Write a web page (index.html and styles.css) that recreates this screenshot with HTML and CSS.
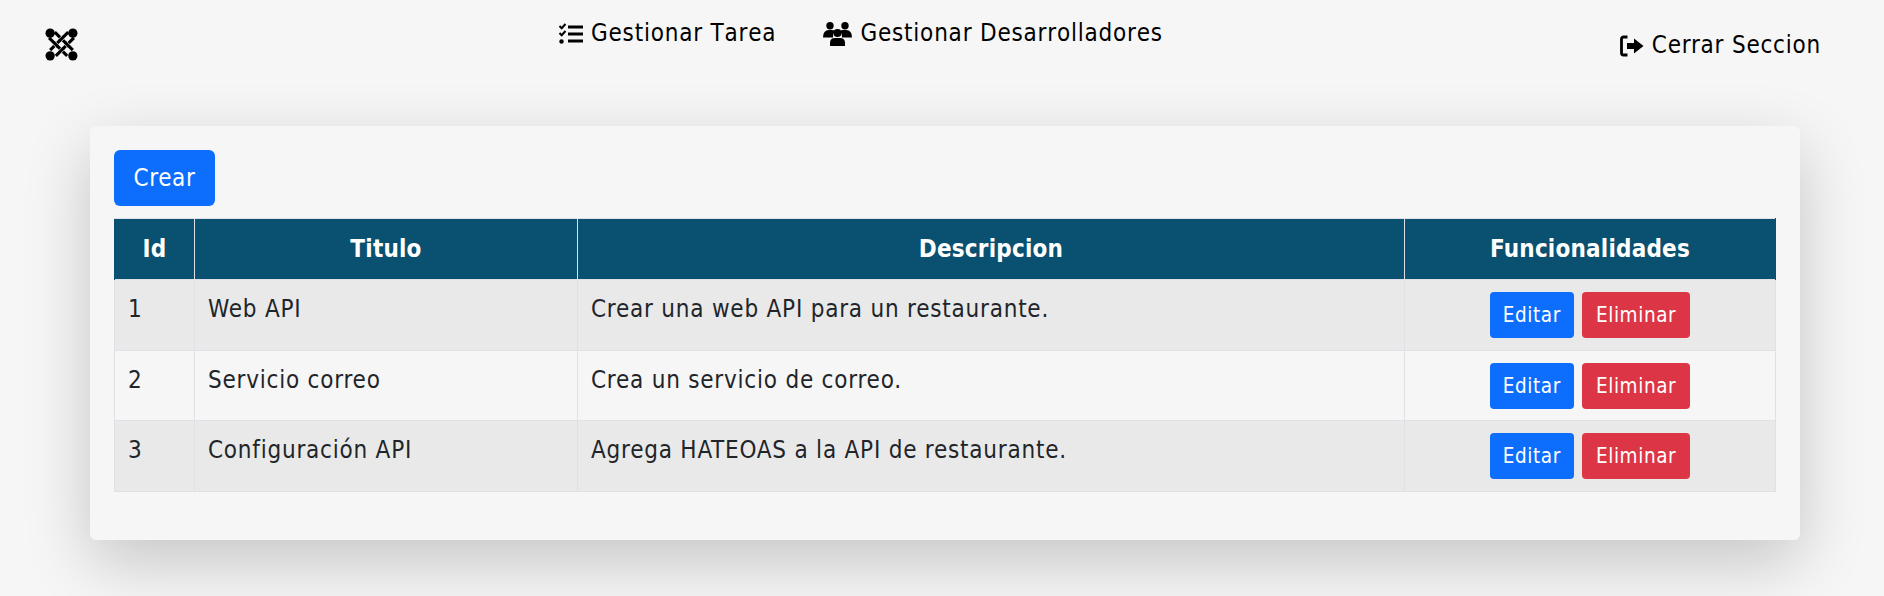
FILE: index.html
```html
<!DOCTYPE html>
<html lang="es">
<head>
<meta charset="utf-8">
<title>Gestionar Tarea</title>
<link rel="stylesheet" href="styles.css">
</head>
<body>
<header class="topbar">
  <a class="brand" href="#" aria-label="Inicio">
    <svg class="logo" viewBox="0 0 32 32" aria-hidden="true">
      <g class="strand">
        <path d="M4 9.500 L21.500 27"/>
        <path d="M9.500 4 L27 21.500"/>
        <path d="M22.500 4 L5 21.500"/>
        <path d="M28 9.500 L10.500 27"/>
      </g>
      <path class="halo" d="M9 14.500 L12 17.500 M20 14.500 L23 17.500 M17.500 9 L14.500 12 M17.500 20 L14.500 23"/>
      <path class="strand" d="M8.500 14 L12.500 18 M19.500 14 L23.500 18 M18 8.500 L14 12.500 M18 19.500 L14 23.500"/>
      <circle cx="5" cy="5" r="4.500"/><circle cx="27" cy="5" r="4.500"/>
      <circle cx="5" cy="27" r="4.500"/><circle cx="27" cy="27" r="4.500"/>
    </svg>
  </a>
  <nav class="mainnav">
    <a class="navlink" href="#">
      <svg class="ico ico-tasks" viewBox="0 0 24 24" aria-hidden="true">
        <path class="line" d="M9 5h15M9 12h15M9 19h15"/>
        <path class="check" d="M0.500 4l2.200 2.200L6.500 2M0.500 11l2.200 2.200L6.500 9"/>
        <circle cx="2.500" cy="19.500" r="2.200"/>
      </svg>
      Gestionar Tarea
    </a>
    <a class="navlink" href="#">
      <svg class="ico ico-users" viewBox="0 0 29 24" aria-hidden="true">
        <circle cx="7" cy="3.700" r="3.700"/>
        <circle cx="22" cy="3.700" r="3.700"/>
        <circle cx="14.500" cy="11" r="4"/>
        <path d="M0 15.500q0-7.500 6-7.500h3q2 0 3 1-2 2-2 6.500H1z"/>
        <path d="M29 15.500q0-7.500-6-7.500h-3q-2 0-3 1 2 2 2 6.500h9z"/>
        <path d="M7 24v-3q0-5 5-5h5q5 0 5 5v3z"/>
      </svg>
      Gestionar Desarrolladores
    </a>
  </nav>
  <a class="navlink logout" href="#">
    <svg class="ico ico-out" viewBox="0 0 24 24" aria-hidden="true">
      <path class="bracket" d="M7.500 3H3.500A2 2 0 0 0 1.500 5v14a2 2 0 0 0 2 2h4"/>
      <path d="M7 9h7V4.500l9.500 7.500-9.500 7.500V15H7z"/>
    </svg>
    Cerrar Seccion
  </a>
</header>
<main class="card">
  <button class="btn btn-primary btn-lg" type="button">Crear</button>
  <table class="grid">
    <thead>
      <tr>
        <th class="col-id">Id</th>
        <th class="col-title">Titulo</th>
        <th class="col-desc">Descripcion</th>
        <th class="col-actions">Funcionalidades</th>
      </tr>
    </thead>
    <tbody>
      <tr>
        <td>1</td><td>Web API</td><td>Crear una web API para un restaurante.</td>
        <td class="actions"><button class="btn btn-primary" type="button">Editar</button><button class="btn btn-danger" type="button">Eliminar</button></td>
      </tr>
      <tr>
        <td>2</td><td>Servicio correo</td><td>Crea un servicio de correo.</td>
        <td class="actions"><button class="btn btn-primary" type="button">Editar</button><button class="btn btn-danger" type="button">Eliminar</button></td>
      </tr>
      <tr>
        <td>3</td><td>Configuración API</td><td>Agrega HATEOAS a la API de restaurante.</td>
        <td class="actions"><button class="btn btn-primary" type="button">Editar</button><button class="btn btn-danger" type="button">Eliminar</button></td>
      </tr>
    </tbody>
  </table>
</main>
</body>
</html>
```
FILE: styles.css
```css
* { box-sizing: border-box; }
html, body { height: 100%; }
body {
  margin: 0;
  height: 596px;
  overflow: hidden;
  background: #f6f6f6;
  color: #212529;
  font-family: "DejaVu Sans Condensed", "DejaVu Sans", sans-serif;
  font-stretch: condensed;
  font-size: 24px;
  letter-spacing: .78px;
}
.topbar {
  display: flex;
  align-items: flex-start;
  height: 126px;
  padding: 0 63px 0 45px;
}
.brand { display: block; margin-top: 28px; line-height: 0; }
.logo { width: 33px; height: 33px; }
.strand { fill: none; stroke: #000; stroke-width: 3; }
.halo { fill: none; stroke: #f6f6f6; stroke-width: 4; }
.mainnav {
  display: flex;
  gap: 47px;
  margin-left: 481px;
  margin-top: 17px;
  letter-spacing: .8px;
  font-kerning: none;
}
.navlink {
  display: inline-flex;
  align-items: center;
  gap: 8px;
  color: #000;
  text-decoration: none;
  line-height: 33px;
  white-space: nowrap;
}
.logout { margin-left: auto; margin-top: 29px; }
.ico { display: block; flex: none; }
.ico-tasks { width: 24px; height: 24px; }
.ico-tasks .line { fill: none; stroke: #000; stroke-width: 3; }
.ico-tasks .check { fill: none; stroke: #000; stroke-width: 2; }
.ico-users { width: 29px; height: 24px; }
.ico-out { width: 24px; height: 24px; }
.ico-out .bracket { fill: none; stroke: #000; stroke-width: 2.800; }
.card {
  width: 1710px;
  height: 414px;
  margin-left: 90px;
  padding: 24px;
  background: #f6f6f6;
  border-radius: 6px;
  box-shadow: 0 22px 66px rgba(0, 0, 0, .2);
}
.btn {
  display: inline-block;
  border: 0;
  color: #fff;
  font: inherit;
  letter-spacing: .6px;
  cursor: pointer;
  border-radius: 4px;
  height: 46px;
  padding: 0 13px;
  font-size: 20.500px;
}
.btn-lg { height: 56px; width: 101px; padding: 0; font-size: 24px; border-radius: 6px; display: block; }
.btn-primary { background: #0d6efd; }
.btn-danger { background: #dc3545; margin-left: 8px; padding: 0 14px; }
.grid {
  width: 1661px;
  margin-top: 12px;
  border-collapse: collapse;
  table-layout: fixed;
}
.grid th {
  height: 61px;
  background: #0a5070;
  color: #fff;
  font-weight: 700;
  letter-spacing: .2px;
  text-align: center;
  border: 1px solid #dee2e6;
  border-bottom: 0;
  padding: 0 12px;
}
.grid th:first-child { border-left-color: #0a5070; }
.grid th:last-child { border-right-color: #0a5070; }
.grid td {
  height: 70.500px;
  border: 1px solid #dee2e6;
  padding: 15px 12px 0 13px;
  vertical-align: top;
}
.grid tbody tr:nth-child(odd) td { background: #e9e9e9; }
.grid .actions { text-align: center; padding: 12px 12px 0; }
.col-id { width: 80px; }
.col-title { width: 383px; }
.col-desc { width: 827px; }
.col-actions { width: 371px; }
```
